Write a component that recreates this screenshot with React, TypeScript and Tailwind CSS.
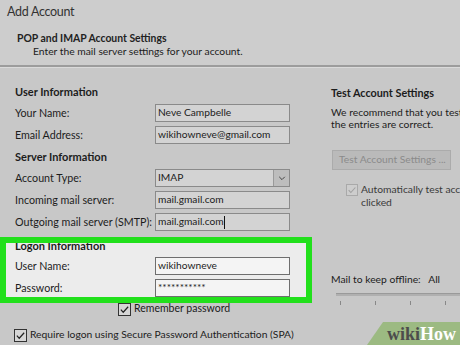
import React from 'react';

const Check = ({ color = '#222' }: { color?: string }) => (
  <svg viewBox="0 0 12 12" className="w-full h-full">
    <path d="M2 6.2l2.6 2.8L10 3" fill="none" stroke={color} strokeWidth={1.3} />
  </svg>
);

const Row = ({ label, value, light, children }: { label: string; value?: string; light?: boolean; children?: React.ReactNode }) => (
  <div className="flex items-center h-[22px]">
    <span className="w-[155px] pl-[15px] text-[#1c1c1c]">{label}</span>
    <div
      className={`relative w-[135px] h-[18px] border flex items-center pl-[2px] text-[10.2px] ${light ? 'bg-[#f4f4f4] border-[#6e6e6e]' : 'bg-[#d3d3d3] border-[#8a8a8a]'}`}
    >
      {value}
      {children}
    </div>
  </div>
);

const App: React.FC = () => {
  return (
    <div className="w-[460px] h-[345px] overflow-hidden relative bg-[#c8c8c8] text-[10.7px] text-[#1c1c1c] whitespace-nowrap font-['Lato',sans-serif]">
      {/* Header */}
      <div className="h-[67px] bg-[#cdcdcd] border-b-2 border-[#9c9c9c]">
        <div className="pl-[7px] pt-[3px] text-[12.5px] tracking-[-0.3px] leading-[18px] text-[#333]">Add Account</div>
        <div className="pl-[17px] pt-[11px] font-bold text-[10.4px] leading-[13px] text-[#222]">POP and IMAP Account Settings</div>
        <div className="pl-[33px] text-[10.3px] leading-[13px]">Enter the mail server settings for your account.</div>
      </div>
      <div className="h-px bg-[#dadada]" />

      <div className="flex">
        {/* Left column */}
        <div className="w-[312px] shrink-0 pt-[13px]">
          <div className="h-[21px] leading-[21px] pl-[15px] font-bold text-[11px]">User Information</div>
          <Row label="Your Name:" value="Neve Campbelle" />
          <Row label="Email Address:" value="wikihowneve@gmail.com" />
          <div className="h-[21px] leading-[21px] pl-[15px] font-bold text-[11px]">Server Information</div>
          <Row label="Account Type:" value="IMAP">
            <div className="absolute right-0 top-0 bottom-0 w-[16px] bg-[#bdbdbd] border-l border-[#9a9a9a] flex items-center justify-center">
              <svg viewBox="0 0 10 10" className="w-[8px] h-[8px]">
                <path d="M1.5 3.5L5 7l3.5-3.5" fill="none" stroke="#333" strokeWidth={1.1} />
              </svg>
            </div>
          </Row>
          <Row label="Incoming mail server:" value="mail.gmail.com" />
          <Row label="Outgoing mail server (SMTP):" value="mail.gmail.com">
            <span className="w-px h-[13px] bg-[#111]" />
          </Row>

          <div className="relative mt-[4px] h-[66px] bg-[#c8c8c8]">
            <div className="absolute left-[6px] right-[6px] top-[6px] bottom-[6px] bg-[#ececec]" />
            <div className="relative pt-[1px]">
              <div className="h-[17px] leading-[16px] pl-[15px] font-bold text-[11px]">Logon Information</div>
              <Row label="User Name:" value="wikihowneve" light />
              <Row label="Password:" value="***********" light />
            </div>
            <div className="absolute inset-0 border-[6px] border-[#22e01c]" />
          </div>

          <div className="flex items-center pl-[118px] -mt-[1px] h-[14px] relative">
            <span className="shrink-0 w-[13px] h-[13px] border border-[#333] bg-[#d6d6d6]">
              <Check />
            </span>
            <span className="pl-[3px] text-[10.5px]">Remember password</span>
          </div>
          <div className="flex items-center pl-[14px] mt-[12px] h-[14px]">
            <span className="shrink-0 w-[13px] h-[13px] border border-[#333] bg-[#d6d6d6]">
              <Check />
            </span>
            <span className="pl-[3px] text-[10.3px]">Require logon using Secure Password Authentication (SPA)</span>
          </div>
        </div>

        {/* Right column */}
        <div className="flex-1 pl-[19px] pt-[18px] text-[10.3px]">
          <div className="font-bold text-[10.8px] leading-[14px]">Test Account Settings</div>
          <div className="mt-[6px] leading-[12px]">
            We recommend that you test the account
            <br />
            the entries are correct.
          </div>
          <div className="mt-[20px] ml-[1px] w-[119px] h-[20px] bg-[#bababa] border border-[#ababab] flex items-center pl-[6px] text-[#8b8b8b]">
            Test Account Settings ...
          </div>
          <div className="flex mt-[13px] ml-[15px]">
            <span className="mt-[1px] w-[12px] h-[12px] border border-[#a9a9a9] bg-[#cdcdcd] shrink-0">
              <Check color="#a0a0a0" />
            </span>
            <div className="pl-[3px] leading-[13px] text-[#3a3a3a]">
              Automatically test account settings when Next is
              <br />
              clicked
            </div>
          </div>

          <div className="mt-[64px] leading-[13px]">Mail to keep offline:&nbsp;&nbsp; All</div>
          <div className="mt-[7px] ml-[5px] h-[3px] bg-[#b0b0b0] border-t border-[#9a9a9a]" />
          <div className="flex ml-[9px] mt-[5px] gap-[34px]">
            <span className="w-px h-[4px] bg-[#888]" />
            <span className="w-px h-[4px] bg-[#888]" />
            <span className="w-px h-[4px] bg-[#888]" />
            <span className="w-px h-[4px] bg-[#888]" />
          </div>
        </div>
      </div>

      {/* wikiHow watermark */}
      <div className="absolute right-0 bottom-0 w-[93px] h-[23px] bg-[#9cba82] [clip-path:polygon(16px_0,100%_0,100%_100%,0_100%)] flex items-center justify-end pr-[4px]">
        <span className="font-['Liberation_Serif',serif] font-bold text-[18px] leading-none">
          <span className="text-[#4c4c4c]">wiki</span>
          <span className="text-white">How</span>
        </span>
      </div>
    </div>
  );
};

export default App;
